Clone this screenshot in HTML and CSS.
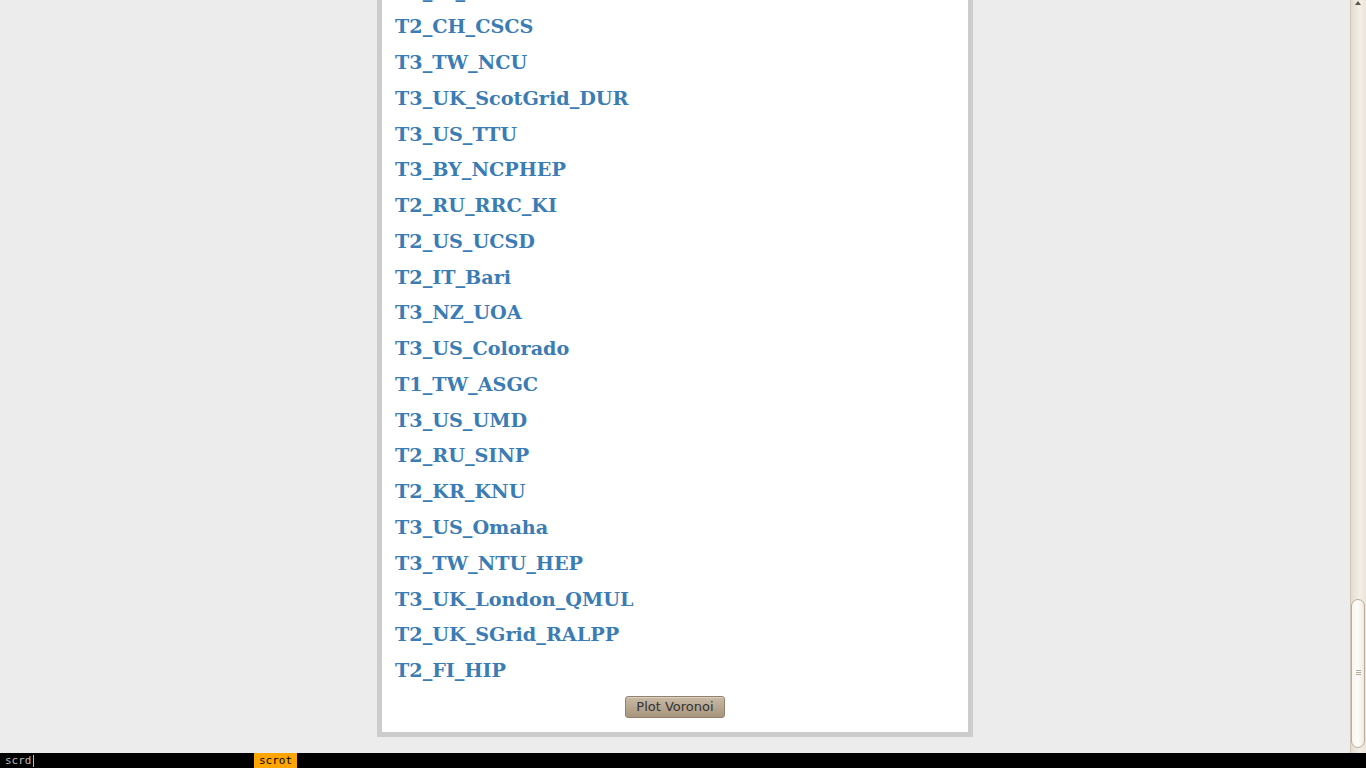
FILE: index.html
```html
<!DOCTYPE html>
<html>
<head>
<meta charset="utf-8">
<title>Sites</title>
<link rel="stylesheet" href="styles.css">
</head>
<body>
<div class="page">
  <div class="panel">
    <ul class="sites">
      <li><a href="#">T2_IT_Pisa</a></li>
      <li><a href="#">T2_CH_CSCS</a></li>
      <li><a href="#">T3_TW_NCU</a></li>
      <li><a href="#">T3_UK_ScotGrid_DUR</a></li>
      <li><a href="#">T3_US_TTU</a></li>
      <li><a href="#">T3_BY_NCPHEP</a></li>
      <li><a href="#">T2_RU_RRC_KI</a></li>
      <li><a href="#">T2_US_UCSD</a></li>
      <li><a href="#">T2_IT_Bari</a></li>
      <li><a href="#">T3_NZ_UOA</a></li>
      <li><a href="#">T3_US_Colorado</a></li>
      <li><a href="#">T1_TW_ASGC</a></li>
      <li><a href="#">T3_US_UMD</a></li>
      <li><a href="#">T2_RU_SINP</a></li>
      <li><a href="#">T2_KR_KNU</a></li>
      <li><a href="#">T3_US_Omaha</a></li>
      <li><a href="#">T3_TW_NTU_HEP</a></li>
      <li><a href="#">T3_UK_London_QMUL</a></li>
      <li><a href="#">T2_UK_SGrid_RALPP</a></li>
      <li><a href="#">T2_FI_HIP</a></li>
    </ul>
    <div class="actions">
      <button class="plot-btn" type="button">Plot Voronoi</button>
    </div>
  </div>
</div>

<div class="scrollbar">
  <div class="arrow-up"></div>
  <div class="thumb"><span class="grip"></span></div>
</div>

<div class="dmenu">
  <span class="prompt">scrd<span class="cursor"></span></span>
  <span class="item-sel">scrot</span>
</div>
</body>
</html>
```

FILE: styles.css
```css
html, body {
  margin: 0;
  padding: 0;
  overflow: hidden;
  background: #ececec;
}

.page {
  width: 1350px;
  height: 753px;
  background: #ececec;
  overflow: hidden;
}

.panel {
  width: 586px;
  margin: -31.5px auto 0;
  background: #ffffff;
  border: 5px solid #cccccc;
  padding: 0 0 14px;
}

.sites {
  list-style: none;
  margin: 0;
  padding: 0 0 0 13px;
}

.sites li {
  height: 35.78px;
  line-height: 35.78px;
  font-family: "DejaVu Serif", serif;
  font-weight: bold;
  font-size: 19.2px;
}

.sites a {
  color: #3a7cb3;
  text-decoration: none;
}

.actions {
  display: flex;
  justify-content: center;
  padding-top: 7px;
}

.plot-btn {
  height: 22px;
  width: 100px;
  padding: 0;
  font-family: "DejaVu Sans", sans-serif;
  font-size: 13px;
  color: #333333;
  background: linear-gradient(#c9baa5, #a8957d);
  border: 1px solid #93816b;
  border-radius: 3px;
  box-shadow: inset 0 1px 0 rgba(255,255,255,0.35);
}

.scrollbar {
  position: fixed;
  top: 0;
  right: 0;
  width: 16px;
  height: 753px;
  background: linear-gradient(to right, #e3dccf, #f3efe8 60%, #ebe5da);
  border-left: 1px solid #cfc6b6;
  box-sizing: border-box;
}

.arrow-up {
  position: absolute;
  top: 1px;
  left: 4px;
  width: 0;
  height: 0;
  border-left: 3px solid transparent;
  border-right: 3px solid transparent;
  border-bottom: 4px solid #5a544a;
}

.thumb {
  position: absolute;
  top: 599px;
  left: 0;
  width: 14px;
  height: 149px;
  box-sizing: border-box;
  border: 1px solid #b9ad97;
  border-radius: 7px;
  background: linear-gradient(to right, #f8f6f1, #fdfcfa 50%, #efe9df);
}

.grip {
  position: absolute;
  left: 4px;
  top: 70px;
  width: 5px;
  height: 5px;
  border-top: 1px solid #b5ab9a;
  border-bottom: 1px solid #b5ab9a;
  box-sizing: border-box;
}

.grip::after {
  content: "";
  position: absolute;
  left: 0;
  top: 1px;
  width: 5px;
  border-top: 1px solid #b5ab9a;
}

.dmenu {
  position: fixed;
  left: 0;
  bottom: 0;
  width: 1366px;
  height: 15px;
  background: #000000;
  display: flex;
  align-items: center;
  font-family: "DejaVu Sans Mono", monospace;
  font-size: 11px;
  line-height: 15px;
}

.prompt {
  color: #bbbbbb;
  width: 254px;
  padding-left: 5px;
  box-sizing: border-box;
  display: flex;
  align-items: center;
}

.cursor {
  display: inline-block;
  width: 1px;
  height: 12px;
  background: #bbbbbb;
  margin-left: 1px;
}

.item-sel {
  background: #ffa500;
  color: #000000;
  padding: 0 5px;
  height: 15px;
}
```
